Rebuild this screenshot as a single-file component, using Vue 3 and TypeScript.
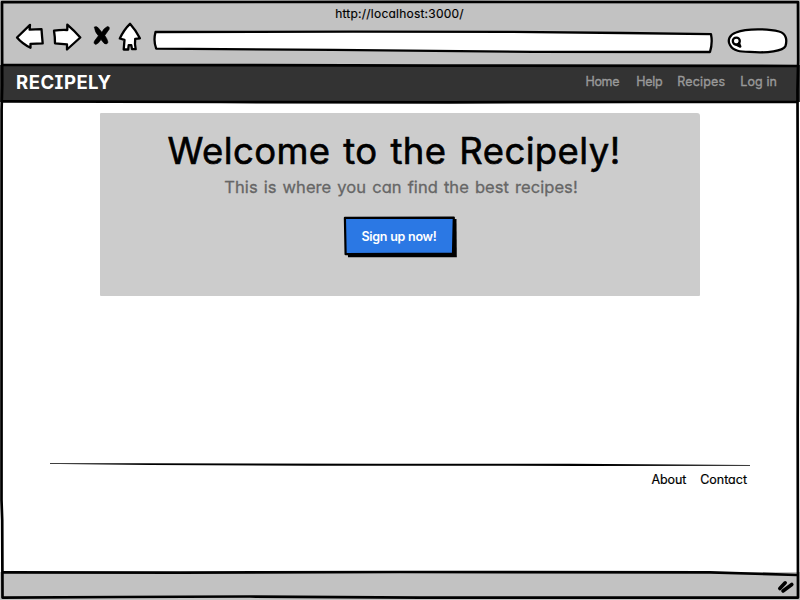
<script setup lang="ts">
interface NavLink {
  label: string
  name: string
}

const url = 'http://localhost:3000/'
const navLinks: NavLink[] = [
  { label: 'Home', name: 'home' },
  { label: 'Help', name: 'help' },
  { label: 'Recipes', name: 'recipes' },
  { label: 'Log in', name: 'login' },
]
const footerLinks: NavLink[] = [
  { label: 'About', name: 'about' },
  { label: 'Contact', name: 'contact' },
]
</script>

<template>
  <div class="window">
    <header class="chrome">
      <div class="url-title"><span>{{ url }}</span></div>
      <div class="toolbar">
        <svg class="ink controls" width="128" height="32" viewBox="0 0 128 32">
          <path d="M2 15.5 L15 2.9 L14.6 7.6 L26.5 7.1 Q27 14.5 27.7 21.3 L15.5 21.8 L15.5 25.8 Q7 21.5 2 15.5Z" />
          <path d="M39 8.7 Q46 7.6 52.3 8 L52.3 2.7 Q59 8.5 65.3 15.5 L52 27.5 L52 22.4 L40 21.3 Q40 14.5 39 8.7Z" />
          <path class="cross" d="M79.5 5.2 Q81 3.7 83.2 5.8 L86.8 10.2 Q89.5 5.8 92.3 4.6 Q95 4.5 94.2 7.2 L89.8 13.4 Q92.2 16.7 93 20.2 Q91.8 23.4 89 21.2 L86 17.6 Q83.8 21.4 80.8 22.5 Q77.8 21.6 79.8 18.6 L83.4 13.8 Q79.5 9.6 79.5 5.2Z" />
          <path d="M115 1.8 Q121 8.5 124.9 16.3 L120.2 16.8 Q119.5 22 120.7 27.2 L117 27 L116.3 23.2 L113.7 23.2 L113.2 27.5 L108.7 27.5 L109.5 17.8 L104.8 16.5 Q109 7.5 115 1.8Z" />
        </svg>
        <svg class="ink address" width="560" height="24" viewBox="0 0 560 24">
          <path d="M2.5 2 L200 1.6 L360 1.8 L470 3 L558 4.2 Q559.8 13 557 22 L380 21.8 L180 19.8 L3.2 18.7 Q.2 11 2.5 2Z" />
        </svg>
        <svg class="ink search" width="62" height="26" viewBox="0 0 62 26">
          <path d="M9 4.5 C20 0 42 .8 52 3.5 C60 5.5 60 13 58.5 18 C56 23.5 39 24.7 28 24.2 C17 23.5 7 24.7 3 17 C0 12 3 6.3 9 4.5Z" />
          <circle cx="9.3" cy="13.1" r="3.5" />
          <path d="M9.3 16.8 L13.3 18.6 M12 15.2 L13.3 18.4" />
        </svg>
      </div>
    </header>

    <nav class="navbar">
      <a class="brand">RECIPELY</a>
      <ul class="nav-links">
        <li v-for="link in navLinks" :key="link.name" :class="link.name">{{ link.label }}</li>
      </ul>
    </nav>

    <main class="page">
      <section class="hero">
        <h1><span>Welcome to the Recipely!</span></h1>
        <p><span>This is where you can find the best recipes!</span></p>
        <button type="button" class="signup">
          <svg class="signup-shape" width="114" height="42" viewBox="0 0 114 42">
            <path class="shadow" d="M4 5 L113.5 3 L113.8 41.3 L5 41.3Z" />
            <path class="face" d="M1.9 1.8 L110.8 1.6 L110 37.5 L2.6 38.2Z" />
          </svg>
          <span>Sign up now!</span>
        </button>
      </section>
      <footer class="footer">
        <svg class="rule" width="700" height="5" viewBox="0 0 700 5">
          <path d="M0 .2 L90 .3 L330 .7 L520 .7 L700 1.9 V2.8 L530 2.9 L260 2.7 L100 2 L10 1.1 L0 1Z" />
        </svg>
        <div class="footer-links">
          <a v-for="link in footerLinks" :key="link.name" :class="link.name">{{ link.label }}</a>
        </div>
      </footer>
    </main>

    <div class="status">
      <svg class="grip" width="18" height="15" viewBox="0 0 18 15">
        <path d="M2.8 9.5 L8.2 3.8 M6 12 L14.8 5.5" />
      </svg>
    </div>

    <svg class="frame" width="800" height="600" viewBox="0 0 800 600">
      <path d="M2 2.2 L400 1.9 L798 2.2 L798.2 60 L797.5 90 L798 300 L797.7 420 L798 597.6 L420 597.6 L250 596.5 L120 597 L2.5 597.6 L2.2 520 L1.5 500 L1.6 110 L2.2 85Z" />
      <path d="M2 65 L240 65.1 L440 65.6 L798 66" />
      <path d="M2 101.3 L220 102 L450 102.3 L640 102 L798 102" />
      <path d="M2 572.3 L180 572.6 L400 572 L710 572.3 L797 575" />
    </svg>
  </div>
</template>

<style>
body {
  background: #fff;
}
</style>

<style scoped>
.window {
  position: relative;
  display: grid;
  grid-template-rows: 65px 37px 470px 28px;
  width: 800px;
  height: 600px;
  overflow: hidden;
  background: #fff;
  color: #000;
  font-family: Inter, "Noto Sans", sans-serif;
  font-feature-settings: "cv11" 1, "cv08" 1;
  stroke-linejoin: round;
}

.chrome {
  background: #c2c2c2;
}

.url-title {
  height: 23px;
  padding: 6px 1px 0 0;
  box-sizing: border-box;
  text-align: center;
  font-size: 12px;
  line-height: 16px;
  letter-spacing: 0.22px;
  -webkit-text-stroke: 0.15px #000;
}

.toolbar {
  display: flex;
  align-items: flex-start;
  padding-left: 15px;
}

.ink {
  flex: none;
  fill: #fff;
  stroke: #000;
  stroke-width: 2.3;
  stroke-linejoin: round;
  stroke-linecap: round;
}

.controls {
  margin-top: -1px;
}

.cross {
  fill: #000;
  stroke-width: 0.6;
}

.address {
  margin: 7px 0 0 10px;
}

.search {
  margin: 5px 0 0 14px;
}

.navbar {
  display: flex;
  justify-content: space-between;
  align-items: center;
  padding: 0 23px 4px 16px;
  background: #333;
}

.brand {
  color: #fff;
  font-size: 18.5px;
  font-weight: 700;
  letter-spacing: 0.5px;
}

.nav-links {
  display: flex;
  gap: 15px;
  margin: 0;
  padding: 0;
  list-style: none;
  color: #999;
  font-size: 12.5px;
  line-height: 16px;
  -webkit-text-stroke: 0.35px #999;
}

.home {
  letter-spacing: -0.3px;
  margin-right: 2px;
}

.help {
  letter-spacing: -0.3px;
}

.recipes {
  letter-spacing: 0.15px;
}

.login {
  letter-spacing: 0.1px;
}

.page {
  display: flex;
  flex-direction: column;
  justify-content: space-between;
  padding: 11px 50px 83px;
}

.hero {
  display: flex;
  flex-direction: column;
  align-items: center;
  width: 600px;
  height: 183px;
  margin: 0 auto;
  border-radius: 1px 3px 1px 1px;
  background: #ccc;
}

h1 {
  margin: 15px 0 0;
  padding-right: 12px;
  font-size: 36.5px;
  font-weight: 400;
  line-height: 46px;
  letter-spacing: 0.4px;
  word-spacing: 2.2px;
  white-space: nowrap;
  -webkit-text-stroke: 0.6px #000;
}

.hero p {
  margin: 3px 0 0;
  padding-left: 2px;
  color: #666;
  font-size: 16.5px;
  line-height: 20px;
  letter-spacing: 0.07px;
  word-spacing: 1.3px;
  white-space: nowrap;
  -webkit-text-stroke: 0.3px #666;
}

.signup {
  display: grid;
  width: 114px;
  height: 42px;
  margin: 19px 0 0;
  padding: 0;
  border: 0;
  background: none;
  color: #fff;
  font: inherit;
  font-size: 12.5px;
  font-weight: 600;
  letter-spacing: -0.25px;
}

.signup > * {
  grid-area: 1 / 1;
}

.signup > span {
  place-self: center;
  padding: 0 2px 2px 0;
}

.face {
  fill: #2b78e4;
  stroke: #000;
  stroke-width: 2.2;
}

.footer-links {
  display: flex;
  justify-content: flex-end;
  gap: 14px;
  padding-right: 3px;
  font-size: 12.5px;
  line-height: 18px;
  -webkit-text-stroke: 0.2px #000;
}

.about {
  letter-spacing: -0.15px;
}

.rule {
  display: block;
  margin-bottom: 3px;
}

.status {
  display: flex;
  justify-content: flex-end;
  padding: 7px 5px 0 0;
  box-sizing: border-box;
  background: #c2c2c2;
}

.grip {
  fill: none;
  stroke: #000;
  stroke-width: 3.6;
  stroke-linecap: round;
}

.frame {
  position: absolute;
  inset: 0;
  fill: none;
  stroke: #000;
  stroke-width: 2.7;
  stroke-linejoin: round;
  pointer-events: none;
}
</style>
